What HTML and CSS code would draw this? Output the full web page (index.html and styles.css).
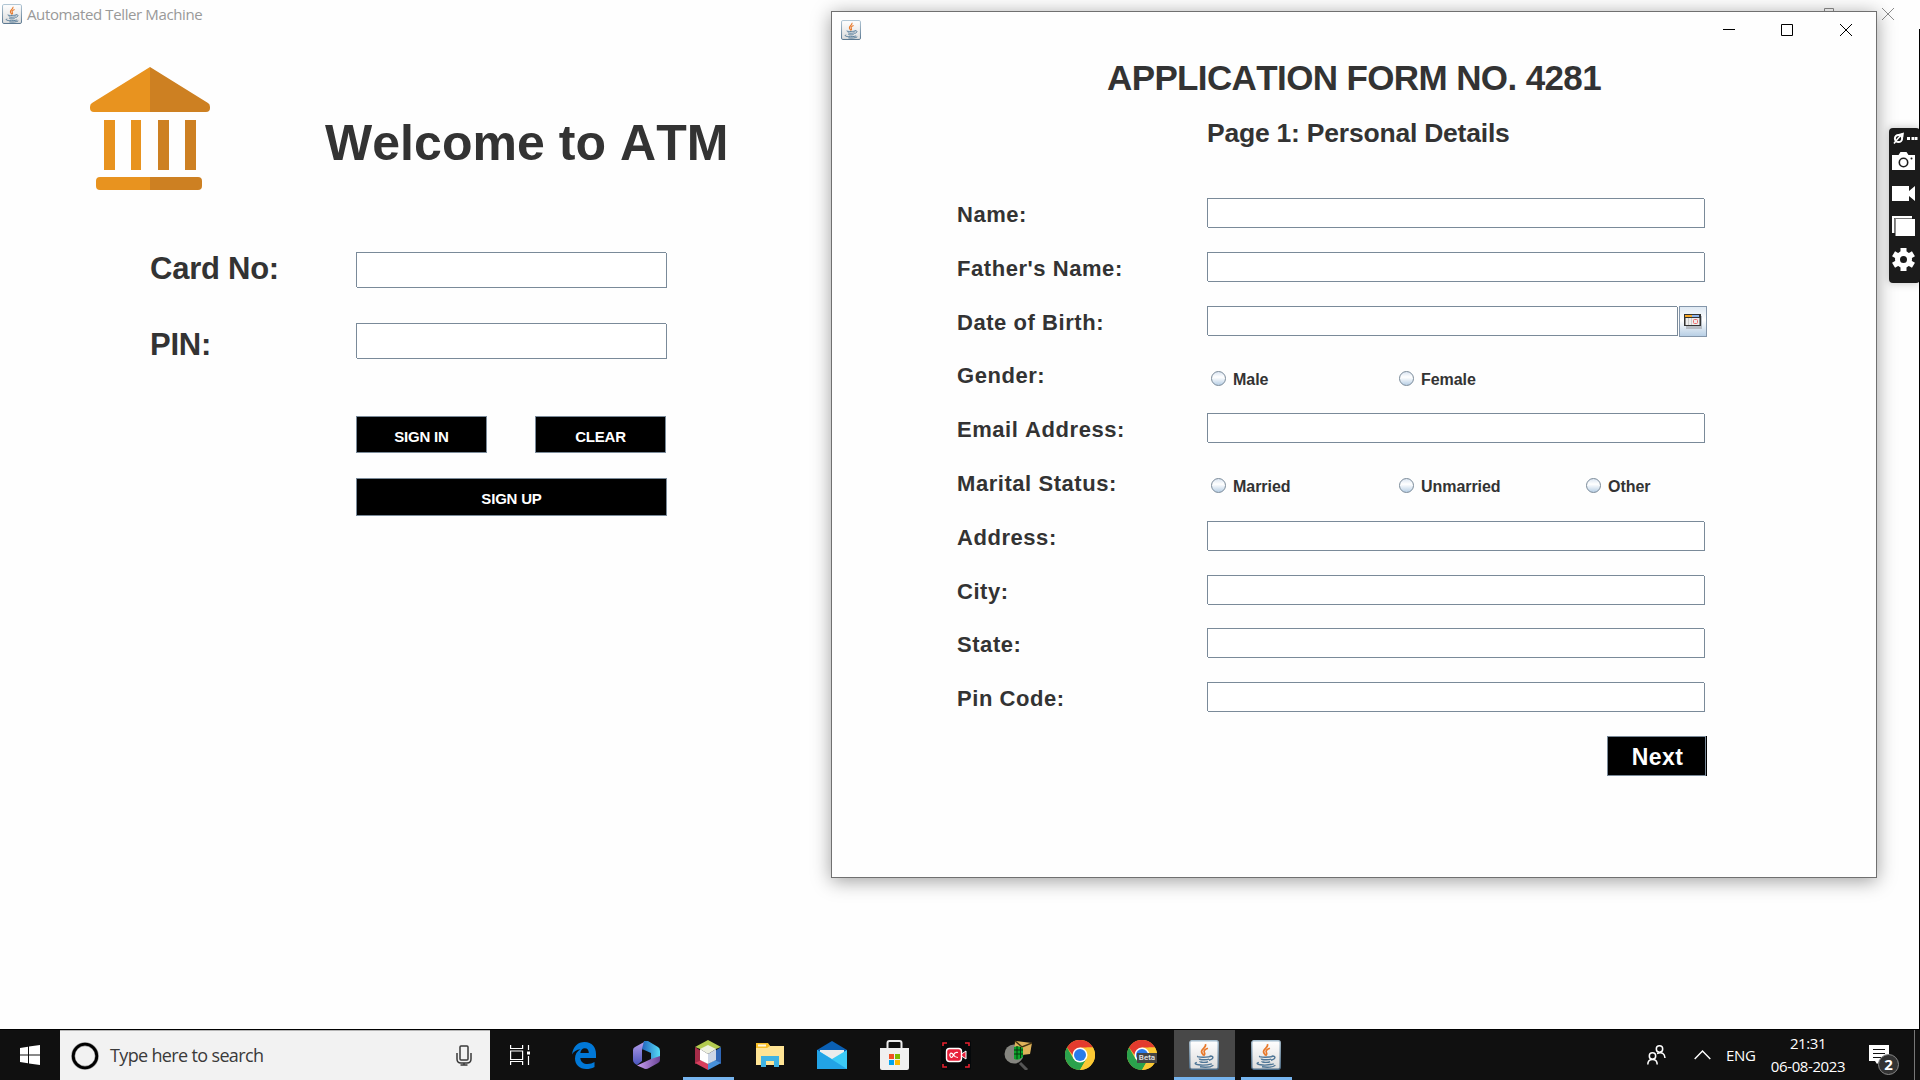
FILE: index.html
```html
<!DOCTYPE html>
<html lang="en">
<head>
<meta charset="utf-8">
<title>Automated Teller Machine</title>
<link rel="stylesheet" href="styles.css">
</head>
<body>
<svg class="defs" width="0" height="0">
  <defs>
    <linearGradient id="tile" x1="0" y1="0" x2="0" y2="1"><stop offset="0" stop-color="#fff"/><stop offset="1" stop-color="#dcdcdc"/></linearGradient>
    <linearGradient id="frame" x1="0" y1="0" x2="0" y2="1"><stop offset="0" stop-color="#a9c0d0"/><stop offset="1" stop-color="#4a6a86"/></linearGradient>
    <symbol id="java" viewBox="0 0 30 30">
      <rect x=".8" y=".8" width="28.4" height="28.4" rx="2" fill="url(#tile)" stroke="url(#frame)" stroke-width="1.4"/>
      <path d="M16.4 4.2c1.6 3.300-4.800 4.700-3.800 8 .3 1.200 1.800 2.300 2.200 3.600M18.900 8.200c-3 1.200-4.600 2.600-3.500 4.300.8 1.200.5 2.200-.5 3.200" fill="none" stroke="#e8792b" stroke-width="1.700"/>
      <path d="M8.800 16.200c-2 1.300 11.500 1.300 13 0M10.400 18.600c-.6 1.600 8.400 1.500 9.700.4M11 21.200c-.5 1.500 6.800 1.400 8 .4M20.600 16.200c4.700-1 4.300 3.200-.6 4M7.800 22.300c-5.600 1.900 5 4.200 15 1.600M11 26.800c5 .8 11 .2 13.400-1.600" fill="none" stroke="#4f7696" stroke-width="1.400"/>
    </symbol>
    <symbol id="chrome" viewBox="0 0 30 30">
      <circle cx="15" cy="15" r="15" fill="#fcc934"/>
      <path d="M15 7.500H28a15 15 0 0 0-26 0l6 8z" fill="#e33b2e"/>
      <path d="M2 7.500A15 15 0 0 0 15 30l6.500-11.200L15 15 8.500 18.700z" fill="#2ba24c"/>
      <path d="M28 7.500A15 15 0 0 1 15 30l6.500-11.200V7.500z" fill="#fcc934"/>
      <circle cx="15" cy="15" r="7.500" fill="#fff"/><circle cx="15" cy="15" r="6" fill="#2a7bea"/>
    </symbol>
  </defs>
</svg>

<main class="desktop">
  <section class="atm">
    <header class="atm-title">
      <svg class="atm-icon"><use href="#java"/></svg>
      <span>Automated Teller Machine</span>
      <svg class="atm-controls" width="72" height="12" fill="none" stroke="#8c8c8c"><path d="M.5 3.500h9v8h-9zM2.500 3V.5h9V9H10M60 0l12 12M72 0 60 12"/></svg>
    </header>
    <div class="atm-hero">
      <svg width="120" height="123" viewBox="0 0 120 123">
        <path d="M60 0 2 36q-2 1-2 4v1q0 4 4 4h56z" fill="#e8931f"/>
        <path d="m60 0 58 36q2 1 2 4v1q0 4-4 4H60z" fill="#cd8022"/>
        <path d="M14 53h11v50H14zM41 53h10v50H41zM60 110H10q-4 0-4 4v5q0 4 4 4h50z" fill="#e8931f"/>
        <path d="M68 53h11v50H68zM95 53h11v50H95zM60 110h48q4 0 4 4v5q0 4-4 4H60z" fill="#cd8022"/>
      </svg>
      <h1>Welcome to ATM</h1>
    </div>
    <form class="login">
      <label>Card No:</label><div class="field"></div>
      <label class="pin">PIN:</label><div class="field"></div>
      <div class="actions">
        <button type="button" class="btn">SIGN IN</button>
        <button type="button" class="btn">CLEAR</button>
        <button type="button" class="btn wide">SIGN UP</button>
      </div>
    </form>
  </section>

  <section class="window">
    <header class="win-title">
      <svg class="win-icon"><use href="#java"/></svg>
      <svg width="130" height="13" fill="none" stroke="#000"><path d="M0 5.500h12M58.500.5h11v11h-11zM117 0l12 12M129 0l-12 12"/></svg>
    </header>
    <h2>APPLICATION FORM NO. 4281</h2>
    <h3>Page 1: Personal Details</h3>
    <form class="details">
      <div class="row"><label>Name:</label><div class="field"></div></div>
      <div class="row"><label>Father's Name:</label><div class="field"></div></div>
      <div class="row"><label>Date of Birth:</label>
        <div class="date"><div class="field"></div>
          <button type="button" class="cal"><svg width="18" height="15"><path d="M2 2h16v13H2z" fill="#b6bcc4"/><path d="M0 0h17v12H0z" fill="#333"/><path d="M1 1h7v2H1z" fill="#f9a825"/><path d="M8 1h7v2H8z" fill="#8fb4e8"/><path d="M1.500 4h14v7h-14z" fill="#eee"/><path d="M4.500 4v7M7.500 4v7" stroke="#ccc"/><rect x="9.500" y="5.500" width="4" height="4" rx="1" fill="none" stroke="#ee6a6a"/></svg></button>
        </div>
      </div>
      <div class="row"><label>Gender:</label><div class="radios"><span><i></i>Male</span><span><i></i>Female</span></div></div>
      <div class="row"><label>Email Address:</label><div class="field"></div></div>
      <div class="row"><label>Marital Status:</label><div class="radios"><span><i></i>Married</span><span><i></i>Unmarried</span><span><i></i>Other</span></div></div>
      <div class="row"><label>Address:</label><div class="field"></div></div>
      <div class="row"><label>City:</label><div class="field"></div></div>
      <div class="row"><label>State:</label><div class="field"></div></div>
      <div class="row"><label>Pin Code:</label><div class="field"></div></div>
      <button type="button" class="next">Next</button>
    </form>
  </section>

  <div class="edge"></div>
  <aside class="recorder">
    <svg width="31" height="155" viewBox="0 0 31 155">
      <g fill="none" stroke="#fff"><circle cx="9.500" cy="10.500" r="3.600" stroke-width="2"/><path d="M5 15.500 8.500 11l5-5.500M9 7l5-1.500-.5 4" stroke-width="1.600"/></g>
      <path d="M18 9h3v3h-3zM22.500 9h3v3h-3zM26 9h2.500v3H26z" fill="#fff"/>
      <path d="M3 27h6.500l2-3h6l2 3H26v15H3z" fill="#fff"/><circle cx="14.500" cy="34.500" r="4.200" fill="none" stroke="#1b1b1b" stroke-width="1.600"/><circle cx="22.500" cy="30.500" r="1" fill="#1b1b1b"/>
      <path d="M3 58h17v5l6-5v15l-6-5v5H3z" fill="#fff"/>
      <path d="M3 88h20v2H5v15H3z" fill="#fff"/><path d="M5.500 105V90.500H23" fill="none" stroke="#777"/><path d="M6.500 91H26v17H6.500z" fill="#fff"/>
      <g transform="translate(14.500 131.500)"><circle r="6" fill="none" stroke="#fff" stroke-width="5"/><path d="M-3-11.500h6V-6h-6zM-3 6h6v5.500h-6z" fill="#fff"/><path d="M-3-11.500h6V-6h-6zM-3 6h6v5.500h-6z" fill="#fff" transform="rotate(60)"/><path d="M-3-11.500h6V-6h-6zM-3 6h6v5.500h-6z" fill="#fff" transform="rotate(120)"/></g>
    </svg>
  </aside>
</main>

<footer class="taskbar">
  <div class="start"><svg width="20" height="20" viewBox="0 0 20 20" fill="#fff"><path d="M0 3l8-1.200v7.700H0zM9 1.600 20 0v9.500H9zM0 10.500h8v7.700L0 17zM9 10.500h11V20L9 18.400z"/></svg></div>
  <div class="search">
    <svg width="28" height="28"><circle cx="14" cy="14" r="11.800" fill="none" stroke="#999" stroke-width="4"/><circle cx="14" cy="14" r="11.800" fill="none" stroke="#000" stroke-width="2.800"/></svg>
    <span>Type here to search</span>
    <svg width="16" height="21" fill="none" stroke="#3a3a3a" stroke-width="1.500"><rect x="4" y="1" width="8" height="14" rx="1"/><path d="M1 8v6q0 4 4 4h6q4 0 4-4V8M8 18v2M4.500 20h7"/></svg>
  </div>
  <nav class="apps">
    <a><svg width="20" height="20" fill="none" stroke="#fff" stroke-width="1.200"><path d="M.6 0v3.500h12V0M.6 6h12v8.500H.6zM.6 20v-3.500h12V20M18.500 0v5M18.500 11v9"/><path d="M17 6.500h3v3h-3z" fill="#fff" stroke="none"/></svg></a>
    <a class="edge-app"><svg width="24" height="27" viewBox="0 0 24 27"><path d="M0 12.500C1 4.500 6 0 12.500 0 20 0 24 5 24 12v4H8.300c.4 4 3.400 6 7.200 6 2.700 0 5-.8 7-2v5c-2.500 1.400-5.300 2-8.300 2C7.500 27 3 22.500 3 16.500c0-4 2-7.500 5.500-9.300C4.500 7.500 1.500 9.500 0 12.500zM8.300 11h8.500c0-3-1.300-4.700-4-4.700-2.500 0-4 1.700-4.500 4.700z" fill="#0178d7"/></svg></a>
    <a><svg width="27" height="28" viewBox="0 0 27 28"><defs><linearGradient id="m1" x1="0" y1="0" x2="0" y2="1"><stop stop-color="#b9a0ec"/><stop offset="1" stop-color="#4a55bd"/></linearGradient><linearGradient id="m2"><stop stop-color="#2264bd"/><stop offset="1" stop-color="#55dcf7"/></linearGradient><linearGradient id="m3"><stop stop-color="#c9a0f3"/><stop offset="1" stop-color="#6b4496"/></linearGradient></defs><path d="M13 0 2 6Q0 7 0 9v10q0 3 4 5l5-4V9z" fill="url(#m1)"/><path d="M11 0h4l10 6q2 1 2 4v9l-9 1v-8l-9-4z" fill="url(#m2)"/><path d="M4 24.500 18 18l9-3v4q0 2-2 3l-9 5q-3 2-6 0z" fill="url(#m3)"/></svg></a>
    <a class="open"><svg width="28" height="30" viewBox="0 0 28 30"><path d="M14 0 27 7 14 12 1 7z" fill="#b3cb4f"/><path d="M1 7l6 4v9l-6 4z" fill="#a52c48"/><path d="m27 7-6 4v9l6 4z" fill="#2f67b7"/><path d="m1 23 6-3 7 4v6z" fill="#d93f5e"/><path d="m27 23-6-3-7 4v6z" fill="#4790da"/><path d="m6 9 8-4 8 4-8 5z" fill="#eef1e0"/><path d="m6 9 8 5v10l-8-4z" fill="#fff"/><path d="m22 9-8 5v10l8-4z" fill="#ccd6e6"/></svg></a>
    <a><svg width="28" height="24" viewBox="0 0 28 24"><path d="M0 1h12l2 2h14v19H0z" fill="#ffe494"/><path d="M0 0h12l2 3-3 2H0z" fill="#f8bf28"/><path d="M2 1.500h8v2H2z" fill="#fff7da"/><path d="M5 13h18v11h-5v-6h-8v6H5z" fill="#3fb3e3"/></svg></a>
    <a><svg width="30" height="28" viewBox="0 0 30 28"><path d="M0 9 15 0l15 9v5H0z" fill="#0a60b4"/><path d="M3 9h24v8l-12 5L3 17z" fill="#ececec"/><path d="m0 9 15 9 15-9v19H0z" fill="#3bcaf6"/><path d="m0 9 30 19H0z" fill="#22a3e6"/></svg></a>
    <a><svg width="29" height="30" viewBox="0 0 29 30"><path d="M7.500 11V3q0-2 2-2h10q2 0 2 2v8" fill="none" stroke="#ececec" stroke-width="2"/><path d="M0 8h29v20q0 2-2 2H2q-2 0-2-2z" fill="#f0f0f0"/><path d="M9 14h5v5H9z" fill="#f04f23"/><path d="M15 14h5v5h-5z" fill="#7eb900"/><path d="M9 20h5v5H9z" fill="#02a3ee"/><path d="M15 20h5v5h-5z" fill="#fdb900"/></svg></a>
    <a><svg width="30" height="30" viewBox="0 0 30 30"><rect width="30" height="30" rx="3" fill="#05080a"/><path d="M2 6V3h4M24 3h4v3M2 24v3h4M24 27h4v-3" fill="none" stroke="#e3212f" stroke-width="1.600"/><path d="m19 15 6-4v8z" fill="#e8203b" stroke="#fff"/><rect x="5.500" y="8.500" width="15" height="13" rx="3" fill="#e8203b" stroke="#fff" stroke-width="1.400"/><path d="M17 12.500q-3-1-4.500 2.500t-3 1.800q-1.500-1.800 0-3.600 1.500-.7 3 1.800t4.500 2.500" fill="none" stroke="#fff" stroke-width="1.200"/></svg></a>
    <a><svg width="28" height="30" viewBox="0 0 28 30"><path d="m16 23 7 7" stroke="#555" stroke-width="3"/><circle cx="10" cy="14" r="9.500" fill="#85857f"/><path d="m11 1 17 2-2 11-16 2z" fill="#dfb35a"/><path d="m11 1 7 6 10-4" fill="none" stroke="#463412" stroke-width="1.500"/><path d="M10 7q5-2 9 1v9q-4 4-9 2z" fill="#0aa52c"/><path d="M13 6v13M16.500 7v11M10 10h9M10 14h9" stroke="#06340f"/></svg></a>
    <a><svg width="30" height="30"><use href="#chrome"/></svg></a>
    <a class="beta"><svg width="30" height="30"><use href="#chrome"/></svg><b>Beta</b></a>
    <a class="open active"><svg width="30" height="30"><use href="#java"/></svg></a>
    <a class="open"><svg width="30" height="30"><use href="#java"/></svg></a>
  </nav>
  <div class="tray">
    <svg class="people" width="19" height="20" fill="none" stroke="#fff" stroke-width="1.500"><circle cx="12.500" cy="4" r="3.200"/><circle cx="5.500" cy="11" r="3.200"/><path d="M.8 19.500q0-5 4.700-5t4.700 5M10 8.500q7.500-2.500 8 4.500"/></svg>
    <svg class="chev" width="17" height="10" fill="none" stroke="#fff" stroke-width="1.400"><path d="m.7 9 7.800-8 7.800 8"/></svg>
    <span class="lang">ENG</span>
    <div class="clock"><span>21:31</span><span>06-08-2023</span></div>
    <div class="notify">
      <svg width="20" height="20"><path d="M0 0h20v16h-9l-3 3-2-3H0z" fill="#fff"/><path d="M4 4.500h12M4 8.500h12M4 12.500h8" stroke="#111"/></svg>
      <b>2</b>
    </div>
    <div class="peek"></div>
  </div>
</footer>
</body>
</html>
```
FILE: styles.css
```css
* { box-sizing: border-box; }
body {
  margin: 0;
  width: 1920px;
  height: 1080px;
  overflow: hidden;
  display: flex;
  flex-direction: column;
  background: #fff;
  color: #333;
  font-family: "Liberation Sans", Arial, sans-serif;
}
svg { display: block; flex: none; }
.defs { position: absolute; }
h1, h2, h3 { margin: 0; white-space: nowrap; font-kerning: none; }
label { font-weight: bold; white-space: nowrap; font-kerning: none; }
button { padding: 0; font-family: inherit; font-weight: bold; }

.desktop { position: relative; height: 1029px; overflow: hidden; background: #fefefe; }

/* Main ATM window, maximised behind the form */
.atm { display: flex; flex-direction: column; }
.atm-title {
  height: 29px;
  display: flex;
  align-items: center;
  padding: 0 26px 1px 2px;
  color: #999;
  font: 15px/28px "Open Sans", "Noto Sans", sans-serif;
}
.atm-title span { margin-left: 5px; letter-spacing: -0.38px; }
.atm-icon { width: 20px; height: 20px; }
.atm-controls { margin-left: auto; }
.atm-hero { display: flex; padding: 38px 0 0 90px; }
.atm-hero h1 { margin: 47px 0 0 115px; font-size: 50px; line-height: 58px; letter-spacing: 0.05px; }
.login {
  display: grid;
  grid-template-columns: 206px 311px;
  row-gap: 35px;
  padding: 62px 0 0 150px;
}
.login label { height: 36px; font-size: 31px; line-height: 36px; margin-top: -1px; letter-spacing: -0.25px; }
.login .pin { margin-top: 4px; height: 32px; }
.actions { grid-column: 2; display: flex; flex-wrap: wrap; justify-content: space-between; row-gap: 25px; padding-top: 22px; }
.btn {
  width: 131px;
  height: 37px;
  padding-top: 3px;
  border: 1px solid #7a8a99;
  background: #000;
  color: #fff;
  font-size: 15px;
  letter-spacing: -0.2px;
}
.btn:nth-child(2) { margin-right: 1px; }
.btn.wide { width: 311px; height: 38px; }

.field { position: relative; height: 30px; border: 1px solid #7a8a99; background: #fff; }
.field::before, .field::after { content: ""; position: absolute; width: 1px; height: 1px; background: #fff; }
.field::before { top: -1px; right: -1px; }
.field::after { bottom: -1px; left: -1px; }
.login .field { height: 36px; }

/* Application form window */
.window {
  position: absolute;
  left: 831px;
  top: 11px;
  width: 1046px;
  height: 867px;
  border: 1px solid #707070;
  background: #fefefe;
  box-shadow: 0 3px 18px rgba(0, 0, 0, .38);
}
.win-title { height: 36px; display: flex; justify-content: space-between; padding: 12px 23px 0 9px; }
.win-icon { width: 20px; height: 20px; margin-top: -4px; }
.window h2 { margin-left: 275px; padding-top: 10px; font-size: 35px; line-height: 40px; letter-spacing: -0.62px; }
.window h3 { margin-left: 375px; padding-top: 19px; font-size: 26.500px; line-height: 32px; letter-spacing: -0.22px; }
.details { display: flex; flex-direction: column; padding: 49px 170px 0 125px; }
.row { display: grid; grid-template-columns: 250px 498px; height: 53.800px; align-items: start; }
.row label { font-size: 22px; line-height: 30px; padding-top: 2px; letter-spacing: 0.55px; }
.date { display: flex; gap: 1px; width: 500px; }
.date .field { flex: 1; }
.cal { width: 28px; height: 31px; border: 1.500px solid #8496aa; background: linear-gradient(#dfe9f3, #fff 45%, #b8cfe5); display: grid; place-items: center; }
.radios { display: grid; grid-template-columns: 188px 187px auto; padding: 10.200px 0 0 4px; font-size: 16px; line-height: 20px; font-weight: bold; letter-spacing: -0.05px; }
.radios span { display: flex; gap: 7px; }
.radios i { width: 15px; height: 15px; margin-top: 1px; border: 1.500px solid #7a8a99; border-radius: 50%; background: linear-gradient(#dce6f2, #fff 40%, #b8cfe5); }
.next {
  align-self: flex-end;
  width: 99px;
  height: 40px;
  padding: 4px 0 0 2px;
  border: 1px solid #7a8a99;
  background: #000;
  box-shadow: 1px 0 #000;
  color: #fff;
  font-size: 23px;
  letter-spacing: .4px;
}

.edge { position: absolute; right: 0; top: 29px; width: 1px; height: 1000px; background: #000; }
.recorder { position: absolute; right: 0; top: 128px; width: 31px; height: 155px; border-radius: 4px; background: #1b1b1b; box-shadow: 0 0 8px rgba(0, 0, 0, .25); }

/* Taskbar */
.taskbar { height: 51px; display: flex; border-top: 1px solid #000; background: #101010; color: #fff; font-family: "Open Sans", "Noto Sans", sans-serif; }
.start { width: 60px; display: grid; place-items: center; }
.search { width: 430px; display: flex; align-items: center; padding: 0 18px 0 11px; border-top: 1px solid #b5b5b5; background: #f2f2f2; color: #3a3a3a; font-size: 18px; }
.search span { margin: 0 auto 0 11px; padding-bottom: 2px; letter-spacing: -0.65px; }
.apps { display: flex; margin-left: -3px; }
.apps a { width: 62px; display: grid; place-items: center; }
.apps a:first-child { width: 65px; margin-right: 1px; }
.apps .open { background: linear-gradient(#76b4ee, #76b4ee) 6px 100% / 51px 3px no-repeat; }
.apps .active { background: linear-gradient(#76b4ee, #76b4ee) 1px 100% / 61px 3px no-repeat, linear-gradient(#484848, #484848) 1px 0 / 61px 100% no-repeat; }
.beta { position: relative; }
.beta b { position: absolute; left: 26px; top: 23px; width: 20px; height: 10px; background: #454545; color: #e6e6e6; font: 500 8px/10px Roboto, sans-serif; text-align: center; }
.tray { margin-left: auto; display: flex; align-items: center; }
.people { margin-right: 1px; }
.chev { margin-left: 27px; }
.lang { margin-left: 15px; width: 31px; font-size: 15px; letter-spacing: -0.3px; }
.clock { display: flex; flex-direction: column; align-items: center; width: 78px; margin-left: 12px; font-size: 15px; line-height: 23px; letter-spacing: -0.4px; white-space: nowrap; }
.notify { position: relative; margin-left: 22px; width: 45px; }
.notify b { position: absolute; left: 9px; top: 9px; width: 21px; height: 21px; border: 1px solid #888; border-radius: 50%; background: #333; font-size: 15px; line-height: 19px; text-align: center; }
.peek { width: 6px; height: 50px; border-left: 1px solid #777; }
```
